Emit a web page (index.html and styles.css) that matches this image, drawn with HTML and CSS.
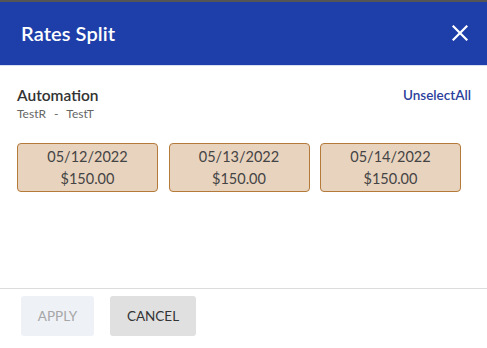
FILE: index.html
```html
<!DOCTYPE html>
<html>
<head>
<meta charset="utf-8">
<link rel="stylesheet" href="styles.css">
</head>
<body>
<div class="topline"></div>
<div class="dialog">
  <header class="header">
    <h1 class="title">Rates Split</h1>
    <button class="close" aria-label="Close">
      <svg width="16" height="16" viewBox="0 0 16 16"><path d="M1.5 1.5 L14.5 14.5 M14.5 1.5 L1.5 14.5" stroke="#fff" stroke-width="2.2" stroke-linecap="square"/></svg>
    </button>
  </header>
  <main class="body">
    <div class="info">
      <div>
        <div class="name">Automation</div>
        <div class="sub">TestR&nbsp; - &nbsp;TestT</div>
      </div>
      <a class="unselect">UnselectAll</a>
    </div>
    <div class="cards">
      <div class="card"><div>05/12/2022</div><div>$150.00</div></div>
      <div class="card"><div>05/13/2022</div><div>$150.00</div></div>
      <div class="card"><div>05/14/2022</div><div>$150.00</div></div>
    </div>
  </main>
  <footer class="footer">
    <button class="btn apply">APPLY</button>
    <button class="btn cancel">CANCEL</button>
  </footer>
</div>
</body>
</html>
```
FILE: styles.css
```css
* { box-sizing: border-box; }
html, body { margin: 0; padding: 0; }
body {
  width: 487px;
  height: 348px;
  overflow: hidden;
  background: #fff;
  font-family: Lato, "Open Sans", sans-serif;
}
.topline { height: 2px; background: #555; }
.dialog { display: flex; flex-direction: column; height: 346px; }
.header {
  height: 64px;
  flex: none;
  background: #1e3faa;
  display: flex;
  align-items: center;
  justify-content: space-between;
  padding: 0 19px 1px 21px;
  border-bottom: 1px solid #d7def0;
}
.title {
  margin: 0;
  color: #fff;
  font-size: 20px;
  font-weight: 600;
  letter-spacing: 0.1px;
}
.close {
  background: none;
  border: 0;
  padding: 0;
  width: 16px;
  height: 16px;
  display: flex;
}
.body { flex: 1; padding: 20px 16px 0 17px; }
.info { display: flex; justify-content: space-between; align-items: flex-start; }
.name { font-size: 15.5px; font-weight: 600; color: #333; line-height: 18px; }
.sub { font-size: 12px; color: #666; margin-top: 3px; line-height: 14px; word-spacing: 1px; }
.unselect {
  font-size: 13.5px;
  font-weight: 600;
  color: #2c3f9c;
  line-height: 18px;
}
.cards { display: flex; gap: 10.5px; margin-top: 22px; }
.card {
  width: 141px;
  height: 49px;
  background: #e8d3bf;
  border: 1px solid #b37a3a;
  border-radius: 4px;
  display: flex;
  flex-direction: column;
  align-items: center;
  justify-content: center;
  font-size: 14.5px;
  color: #444;
  line-height: 22px;
}
.footer {
  height: 60px;
  flex: none;
  border-top: 1px solid #dcdcdc;
  display: flex;
  align-items: flex-start;
  gap: 16px;
  padding: 7px 21px 0;
}
.btn {
  height: 40px;
  border: 0;
  border-radius: 3px;
  font-family: Lato, sans-serif;
  font-size: 13.5px;
  padding: 0;
}
.apply { width: 73px; background: #eef1f6; color: #a6a6a6; }
.cancel { width: 86px; background: #e0e0e0; color: #333; }
```
